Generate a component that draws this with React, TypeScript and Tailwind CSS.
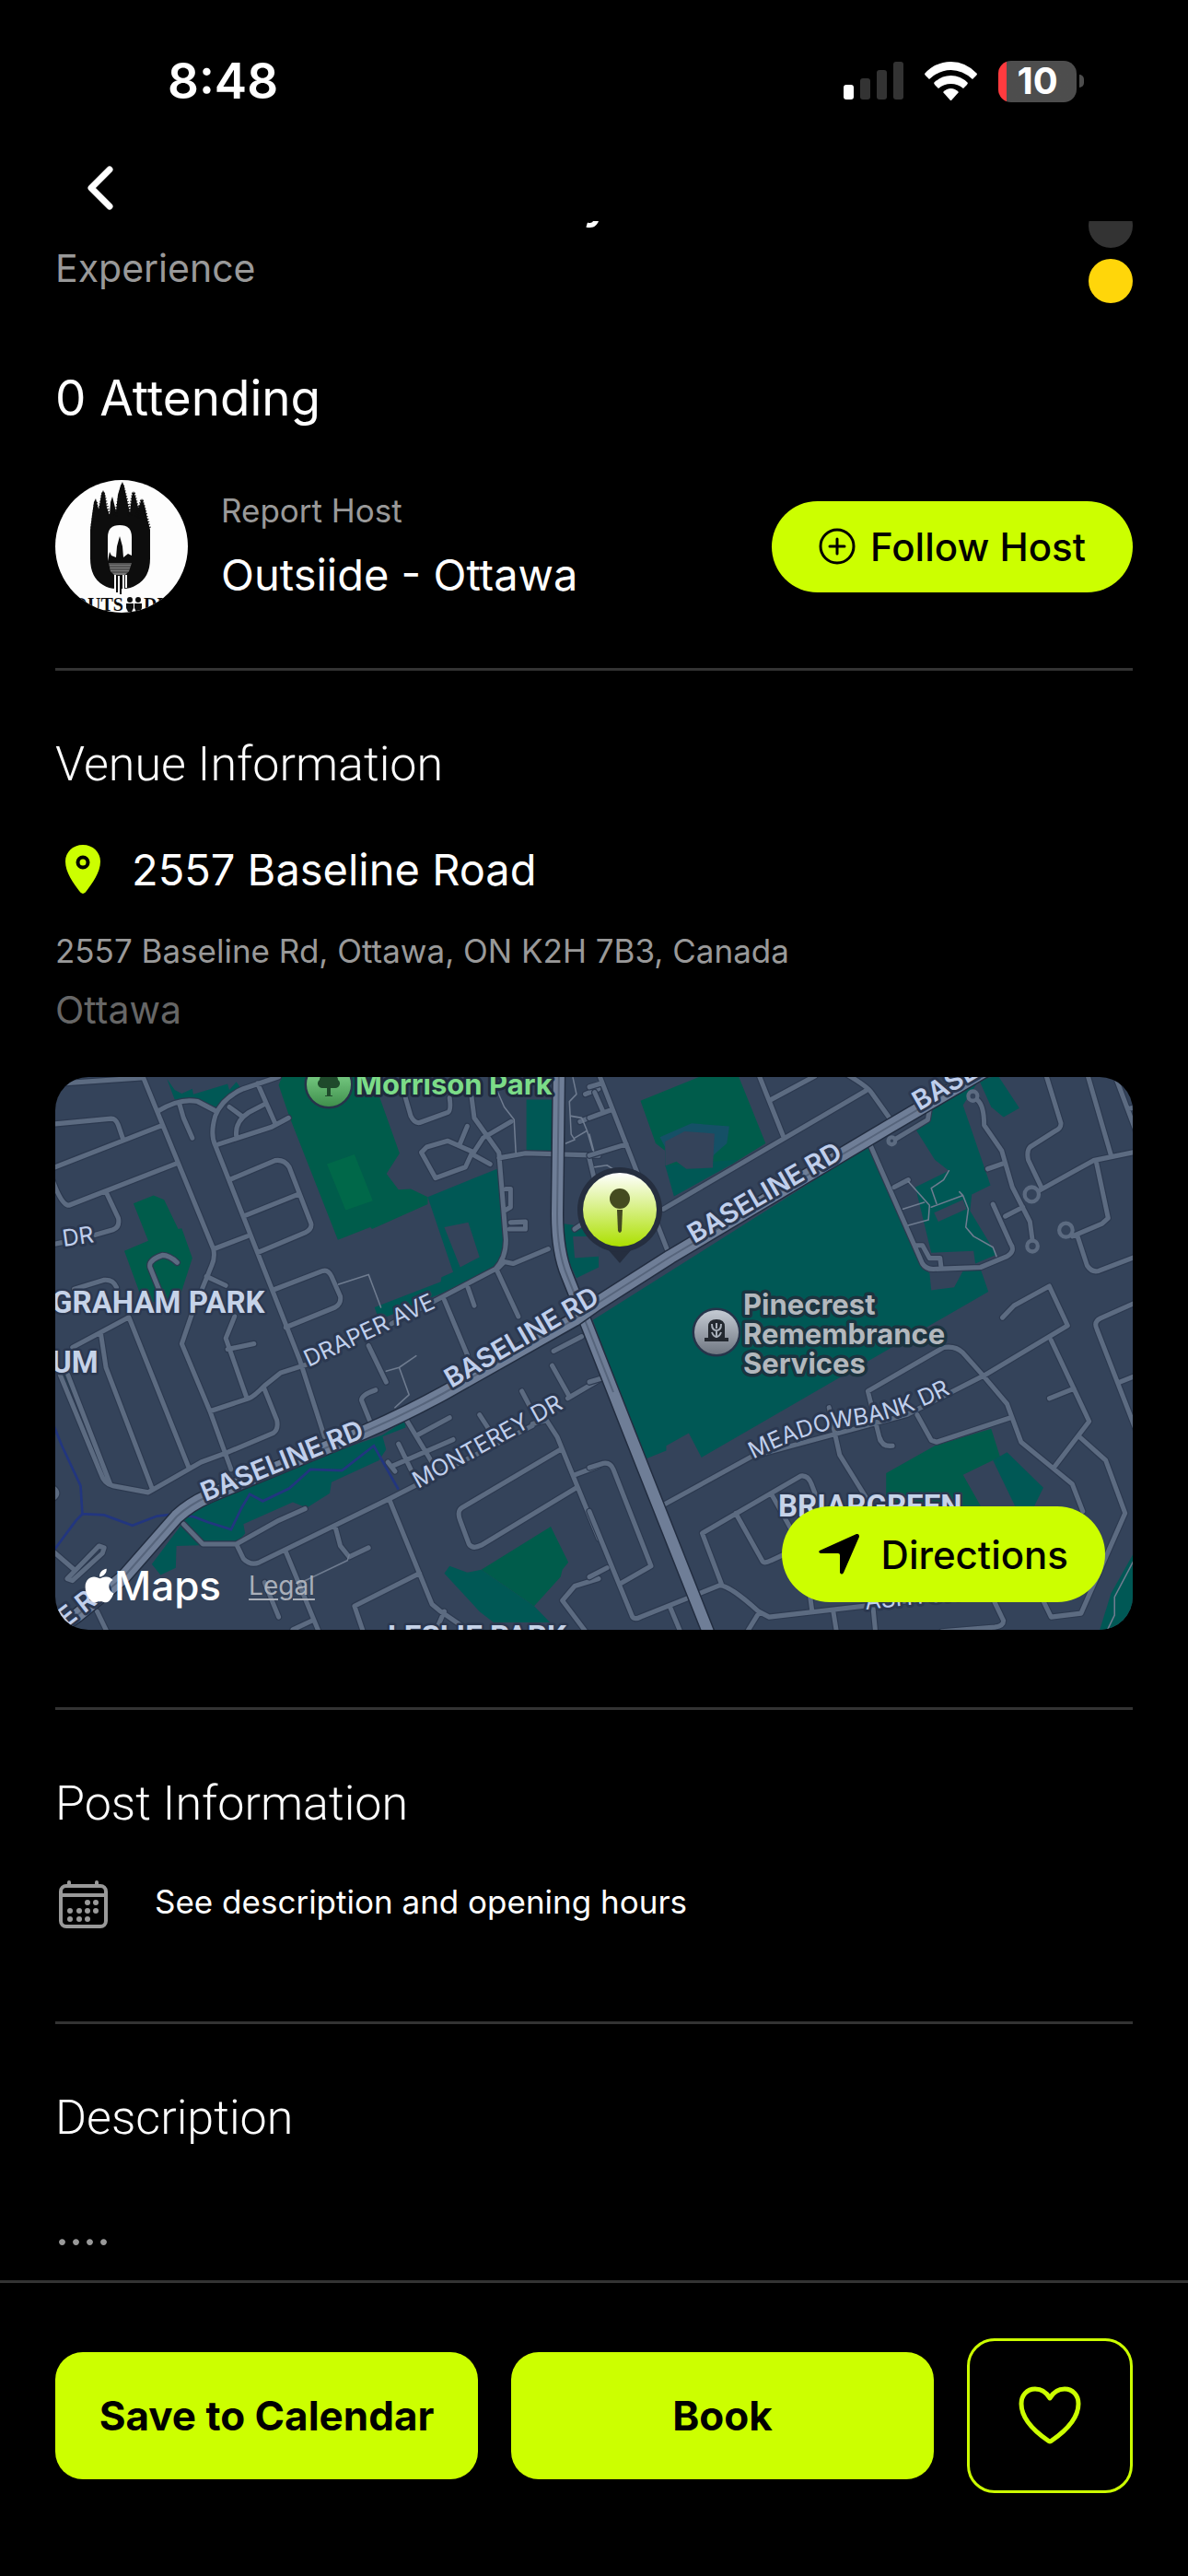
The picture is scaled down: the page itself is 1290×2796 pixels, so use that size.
import type { ReactNode } from "react";
import { FaApple } from "react-icons/fa";

type RoadLabel = { text: string; x: number; y: number; rotate: number; major?: boolean };

const ROAD_LABELS: RoadLabel[] = [
    { text: "BASELINE RD", x: 163, y: 461, rotate: -22, major: true },
    { text: "BASELINE RD", x: 430, y: 338, rotate: -30, major: true },
    { text: "BASELINE RD", x: 694, y: 181, rotate: -30, major: true },
    { text: "BASELINE RD", x: 938, y: 37, rotate: -30, major: true },
    { text: "E RD", x: 12, y: 598, rotate: -38, major: true },
    { text: "DRAPER AVE", x: 275, y: 315, rotate: -25 },
    { text: "MONTEREY DR", x: 394, y: 447, rotate: -29 },
    { text: "DR", x: 9, y: 184, rotate: -8 },
    { text: "ASHTON", x: 880, y: 578, rotate: -6 },
];

// West half of the map, drawn on a 1568 grid
const WEST_ROADS = [
    "M20 42L270 25", "M272 15L475 495Q480 520 470 540L415 670L385 755L465 940L525 1100",
    "M320 115Q380 80 430 90L485 118", "M378 95L390 135L415 190",
    "M20 152L185 137Q198 137 205 155L218 192", "M20 272L330 155", "M20 310Q45 375 65 375L370 260",
    "M170 338L205 410Q210 435 190 442L140 456", "M20 482L45 477",
    "M660 22L560 55Q500 80 480 130Q465 180 480 210L720 800L790 1010",
    "M600 40L650 150", "M490 207L640 160L688 135", "M625 95L575 120Q535 145 540 185", "M520 105L555 130",
    "M520 305L650 252Q675 248 690 270L752 425Q755 440 735 450L600 505", "M560 405L715 345", "M475 495L570 460",
    "M645 607L785 555Q800 550 810 570L835 625Q838 645 820 655L680 710",
    "M455 570L510 595", "M80 605L165 580Q190 578 200 600", "M75 765L235 682L405 1095", "M155 725L170 820L302 1155",
    "M40 840L155 1110Q165 1140 190 1145L290 1163L440 1080L510 1055L645 1000Q660 990 655 965L620 880",
    "M62 840L182 1140", "M465 940L575 905Q590 900 620 870L665 835L740 812",
    "M535 680L510 740L570 905", "M515 770L590 755", "M320 605L295 545Q290 525 330 512Q350 512 372 532",
    "M915 760L965 860", "M918 965L895 910Q895 895 935 882", "M1130 635L1195 785",
    "M980 700L1275 550Q1305 520 1305 470L1285 230L1215 135L1205 60",
    "M1020 80L1035 130Q1045 150 1060 148L1140 120Q1150 115 1145 80",
    "M1065 230L1080 215L1140 198L1210 228L1190 270L1105 300Z", "M1195 158L1175 205", "M1210 235L1260 262",
    "M1210 235L1240 190L1320 145", "M1285 245L1360 232L1568 238", "M1305 330L1318 330L1318 380L1300 390",
    "M1315 440L1360 440L1360 420L1318 422", "M1280 550L1300 530L1325 535L1425 495", "M1280 555L1340 680",
    "M1195 595L1215 650", "M390 1250L445 1305L540 1305L660 1240L735 1208",
    "M540 1305L560 1345Q580 1365 605 1355L975 1180L1380 980", "M975 1185L1095 1470L1120 1490L1180 1530",
    "M680 1325L780 1560", "M820 1255L835 1310L860 1340L915 1315", "M1060 1385L875 1475L905 1560",
    "M1130 1490L1105 1545", "M700 1540L755 1515", "M620 1410L660 1505", "M1480 905L1568 855", "M1436 815L1485 900",
    "M1350 885L1385 950", "M1380 975L1420 965L1450 1010L1568 1290",
    "M1460 1045L1180 1205Q1165 1215 1175 1240L1200 1305Q1210 1320 1235 1308L1505 1150", "M1500 1115L1568 1090",
    "M1440 775L1520 735", "M1568 1400L1500 1420L1465 1460L1535 1550", "M1020 960L1095 1080", "M1055 1005L1145 958",
    "M990 1105L970 1080", "M985 1090L1155 1018", "M1000 1030L1035 1100", "M1230 950L1260 995",
    "M20 1325L80 1375", "M60 1400L150 1310L165 1315L160 1330L75 1405Z", "M145 1490L175 1550", "M20 1150Q42 1165 20 1180",
    "M1540 240L1555 300", "M1515 145L1568 125", "M1530 70L1568 55", "M1500 440L1530 420",
];

const WEST_PATHS = [
    "M830 592L915 565L950 655", "M965 830L1002 820L1050 788", "M1002 820L1030 895L990 930",
    "M725 1410L855 1350L860 1335", "M1280 60L1300 105L1328 140L1333 230",
    "M1495 25L1505 70L1485 90L1490 180L1500 195L1475 205", "M1490 130L1520 135L1535 170L1555 235", "M1500 190L1535 170",
];

// East half of the map, same grid
const EAST_ROADS = [
    "M25 10L220 495", "M0 50L35 40", "M0 135L65 112", "M15 65L40 120", "M0 238L105 207", "M480 15L550 185",
    "M515 85L640 20", "M210 385L785 60", "M730 15Q790 50 800 65L855 140",
    "M795 205L945 535Q955 550 975 550L1110 545L1185 515Q1210 500 1195 480L1145 372", "M865 325L905 305",
    "M930 485L945 485L965 520L995 520L998 545", "M965 110L960 140L870 192",
    "M1100 85Q1120 100 1120 155L1170 225L1200 325L1250 420L1257 470", "M1130 275L1175 260",
    "M1180 405L1230 380", "M1275 335L1430 252L1550 228",
    "M1295 15L1338 150Q1338 165 1320 172L1250 215Q1240 225 1245 250L1282 325", "M1413 15L1480 238",
    "M1490 15L1550 170", "M1530 110L1550 105", "M1438 255L1472 410L1455 425L1370 460",
    "M1385 460L1412 540Q1425 560 1445 555L1550 516", "M1172 683L1205 650L1305 597L1357 705L1120 842L900 950L460 1065L205 1200",
    "M1310 745L1418 968L1318 1095", "M1305 905L1375 878", "M1550 642L1450 685Q1430 695 1440 715L1550 990", "M1505 860L1550 843",
    "M825 1020L790 885L1005 765Q1040 760 1060 780L1115 840L1185 920L1225 1025L1370 1140L1400 1215",
    "M825 1015Q830 1038 860 1035", "M930 950L970 1020L985 1025L1195 958", "M680 930L710 1060L790 1185",
    "M1390 1010L1465 1075L1520 1220L1395 1495L1310 1505L1285 1455", "M375 1415L320 1275L600 1118Q620 1115 630 1140L650 1190",
    "M515 1165L570 1260", "M415 1220L490 1350Q495 1360 515 1350L560 1330",
    "M0 1095L40 1083Q60 1080 68 1100L175 1365L85 1415",
    "M0 1215L120 1500Q125 1515 145 1505L370 1418Q400 1420 480 1490L510 1505L960 1455", "M0 1395L50 1370",
    "M230 1480L260 1550", "M480 1495L445 1550", "M692 1490L702 1550", "M805 1480L812 1550",
    "M1150 1465L1175 1515Q1175 1530 1150 1533L1000 1545", "M625 1440L632 1490", "M0 860L35 850",
];

const EAST_PATHS = [
    "M905 310L965 375L962 415L905 430", "M890 385L950 367", "M970 380L1060 348L1075 385L1068 435L1090 460L1145 490L1155 515",
    "M985 370L970 328L1005 305L1020 280", "M1060 348L1050 338", "M1550 1340L1490 1450L1490 1500L1465 1550",
    "M0 180L12 225", "M15 270L50 265L75 280",
];

const CUL_DE_SACS = [
    [858, 198, 10], [1088, 75, 13], [1257, 487, 15], [1255, 345, 20], [1352, 443, 19],
];

const BASELINE = "M-10 608L24 584L74 543L132 477Q146 464 166 455L334 386Q380 366 422 343L564 263L588 246L668 195L905 54L1016 -11";
const GREENBANK = "M547 -10L545 149Q545 190 556 216L580 276L624 388L708 600L714 615";

function Roads({ roads, paths }: { roads: string[]; paths: string[] }) {
    return (
        <g fill="none" strokeLinecap="round" strokeLinejoin="round">
            <path d={roads.join("")} stroke="#2c394f" strokeWidth="19" />
            <path d={roads.join("")} stroke="#5c6b81" strokeWidth="13" />
            <path d={paths.join("")} stroke="#6f7c90" strokeWidth="4" />
        </g>
    );
}

function MapDrawing() {
    return (
        <svg
            viewBox="0 0 1170 600"
            preserveAspectRatio="xMidYMid slice"
            className="block h-full w-full font-[Inter,sans-serif]"
            role="img"
            aria-label="Map of 2557 Baseline Road"
        >
            <defs>
                <linearGradient id="pin" x1="0" y1="0" x2="0" y2="1">
                    <stop offset="0" stopColor="#ffffff" />
                    <stop offset="1" stopColor="#ace000" />
                </linearGradient>
                <linearGradient id="poi-grey" x1="0" y1="0" x2="0" y2="1">
                    <stop offset="0" stopColor="#c5cbd4" />
                    <stop offset="1" stopColor="#6f7681" />
                </linearGradient>
                <linearGradient id="poi-green" x1="0" y1="0" x2="0" y2="1">
                    <stop offset="0" stopColor="#8be096" />
                    <stop offset="1" stopColor="#3f8f4c" />
                </linearGradient>
                <path id="meadowbank" d="M758 415Q816 384 870 378Q930 370 1000 328" />
            </defs>
            <rect width="1170" height="600" fill="#34435a" />

            <g transform="translate(-10 -9) scale(.3827 .3954)">
                <g fill="#005c4b">
                    <path d="M670 20L925 20L1003 232L966 288L1000 332L1035 330L1083 352L1083 372L925 440L920 435L828 470L690 130L660 45Z" />
                    <path d="M248 370L305 348L335 360L375 440L385 438L415 520L375 640L275 640L222 500L290 472Z" />
                    <path d="M1235 1375L1432 1257L1482 1355L1465 1375L1460 1395L1385 1475Z" />
                </g>
                <path d="M797 262L875 235L927 362L850 388Z" fill="#006849" />
                <g fill="#005855">
                    <path d="M343 28L365 58L385 68L415 55L418 70L515 42L520 58L540 36L550 50L490 108L440 90L365 85Z" />
                    <path d="M1083 352L1280 275L1298 420Q1305 520 1270 545L1125 615L945 690L932 655L1120 585L1122 572L1155 558Z" />
                    <path d="M1363 85L1435 85L1435 230L1363 230Z" />
                    <path d="M1465 425L1568 440L1568 545L1505 575L1470 500Z" />
                    <path d="M440 1180L955 1005L1020 965L1020 985L955 1010L965 1045L945 1075L810 1135L805 1165L740 1205L700 1190L560 1250L565 1275L540 1305L370 1310L368 1370L325 1390L300 1360Z" />
                    <path d="M1130 1385L1145 1365L1195 1383L1235 1375L1385 1475L1430 1520L1270 1520L1230 1490Z" />
                    <path d="M50 835L66 840L185 1140L165 1130Z" />
                </g>
                <g fill="#34435a">
                    <path d="M1130 435L1198 422L1230 517L1175 545Z" />
                    <path d="M1495 460L1568 460L1568 515L1500 520Z" />
                </g>
                <Roads roads={WEST_ROADS} paths={WEST_PATHS} />
                <path
                    d="M20 975L45 1035L98 1145L103 1222L165 1225L245 1254L315 1228L370 1222L420 1230L460 1245L525 1265L555 1205L578 1168L615 1187L690 1152L750 1100L840 1103L930 1035L1000 1155M103 1222L85 1240L20 1325"
                    fill="none" stroke="#22367f" strokeWidth="7"
                />
            </g>

            <g transform="translate(580 -9) scale(.3827 .3954)">
                <path d="M145 88L318 20L423 20L500 205L405 262L215 268L215 225L188 205Z" fill="#005c4b" />
                <path d="M842 1110L980 1035L1140 988L1165 1065L1145 1075L1060 1115L1110 1200L842 1200Z" fill="#005c4b" />
                <g fill="#005855">
                    <path d="M215 265L420 250L405 262L240 350Z" />
                    <path d="M10 690L795 210L850 330L945 550L965 560L970 608L1035 600L1060 555L1110 550L1132 612L318 1067L282 1000L218 1035L218 1048L155 1073Z" />
                    <path d="M925 165L985 100L1100 40L1060 100L1138 320L1085 345L1080 390L1155 510L1095 535L1090 500L970 505L925 325L1020 280L980 250Z" />
                    <path d="M1105 30L1160 20L1220 108L1175 133L1140 105Z" />
                    <path d="M1145 1075L1185 1053L1288 1150L1260 1205L1210 1205Z" />
                    <path d="M1550 1320L1480 1440L1445 1550L1550 1550Z" />
                </g>
                <path d="M200 188L290 150L397 158L390 205L358 232L350 240L220 225Z" fill="#155066" />
                <g fill="#34435a">
                    <path d="M215 200L270 172L355 178L350 272L275 275L247 255L215 267Z" />
                    <path d="M978 395L1060 360L1070 385L990 420Z" />
                </g>
                <Roads roads={EAST_ROADS} paths={EAST_PATHS} />
                {CUL_DE_SACS.map(([cx, cy, r]) => (
                    <circle key={cx} cx={cx} cy={cy} r={r} fill="#34435a" stroke="#5c6b81" strokeWidth="11" />
                ))}
            </g>

            {/* main roads */}
            <g fill="none" strokeLinejoin="round">
                <path d={GREENBANK} stroke="#222d40" strokeWidth="15" />
                <path d={GREENBANK} stroke="#6f7e97" strokeWidth="12" />
                <path d="M547 -10L545 149Q545 190 556 216L580 276L606 342" stroke="#56647b" strokeWidth="2" />
                <path d={BASELINE} stroke="#222d40" strokeWidth="17" />
                <path d={BASELINE} stroke="#6f7e97" strokeWidth="14" />
                <path d={BASELINE} stroke="#56647b" strokeWidth="2" />
            </g>

            <g fill="#c0cfec" stroke="#2b3850" strokeWidth="6" strokeLinejoin="round" style={{ paintOrder: "stroke" }}>
                {ROAD_LABELS.map((label) => (
                    <text
                        key={`${label.text}-${label.x}`}
                        x={label.x}
                        y={label.y}
                        transform={`rotate(${label.rotate} ${label.x} ${label.y})`}
                        className={label.major ? "text-[29px] font-semibold" : "text-[25px]"}
                    >
                        {label.text}
                    </text>
                ))}
                <text className="text-[25px]"><textPath href="#meadowbank">MEADOWBANK DR</textPath></text>
            </g>

            <g
                fill="#c6d3e8" stroke="#2b3850" strokeWidth="5" strokeLinejoin="round" style={{ paintOrder: "stroke" }}
                className="font-[Roboto,sans-serif] text-[33px] font-bold"
            >
                <text x="-4" y="256">GRAHAM PARK</text>
                <text x="-4" y="321">UM</text>
                <text x="785" y="477">BRIARGREEN</text>
                <text x="361" y="619">LESLIE PARK</text>
            </g>

            {/* places */}
            <g strokeLinejoin="round" style={{ paintOrder: "stroke" }} className="font-bold">
                <circle cx="297" cy="8" r="24" fill="url(#poi-green)" stroke="#26344a" strokeWidth="5" />
                <path d="M295 20v-8h-5a5 5 0 0 1-3-9 6 6 0 0 1 6-6h8a6 6 0 0 1 6 6 5 5 0 0 1-3 9h-5v8h2v1h-8v-1z" fill="#1f4a2b" />
                <text x="326" y="19" fill="#7cdc88" stroke="#1f2b3d" strokeWidth="6" className="text-[31px]">Morrison Park</text>
                <circle cx="718" cy="277" r="24" fill="url(#poi-grey)" stroke="#26344a" strokeWidth="5" />
                <path d="M709 283v-12q0-8 9-8t9 8v12h4v4h-26v-4z" fill="#23282f" />
                <path d="M718 283v-8M713 268q0 7 5 7t5-7M718 267v6M713 277q2 5 5 5t5-5" fill="none" stroke="#a9b0ba" strokeWidth="2" />
                <g fill="#b3b8bd" stroke="#1c3440" strokeWidth="7" className="text-[31px]">
                    <text x="747" y="258">Pinecrest</text>
                    <text x="747" y="290">Remembrance</text>
                    <text x="747" y="322">Services</text>
                </g>
            </g>

            <path d="M600 187h26l-13 15z" fill="#252e3f" />
            <circle cx="613" cy="144" r="46" fill="#252e3f" />
            <circle cx="613" cy="144" r="40" fill="url(#pin)" />
            <circle cx="613" cy="132" r="11" fill="#454b20" />
            <path d="M610 144h6l-1 23q-2 4-4 0z" fill="#454b20" />
        </svg>
    );
}

function HostLogo() {
    return (
        <svg viewBox="0 0 144 144" className="size-36 shrink-0 rounded-full bg-[#fdfdfd]" role="img" aria-label="Outsiide logo">
            <path
                d="M38 54L40 38L42 24L44 20L47 32L48 28L50 16L52 11L54 16L56 30L59 38L60 24L62 18L64 26L66 34L68 16L71 6L73 2L75 8L78 22L81 36L83 18L85 12L87 18L90 30L92 26L94 20L97 28L100 42L103 54V85Q103 106 88 114Q82 118 74 118H66Q58 118 52 114Q38 106 38 85Z"
                fill="#0d0d0d"
            />
            <g fill="none" stroke="#0d0d0d" strokeWidth="4" strokeDasharray="1 2">
                <path d="M44 24L40 52M44 24L47 46M52 14L46 44M52 14L59 42M73 6L65 40M73 6L82 40M85 14L80 40M85 14L92 42M94 22L88 42M94 22L102 52" />
            </g>
            <path d="M57 88V62Q57 49 70 49Q83 49 83 62V88Z" fill="#fdfdfd" />
            <path d="M57 88L59 78L61 82L66 84L67 72L70 61L73 72L74 84L79 80L83 82V88Z" fill="#0d0d0d" />
            <path d="M58 90H83L80 99L76 103H64L60 99Z" fill="#777" />
            <path d="M58 91H83M59 94H82M60 97H81M61 100H79" stroke="#333" strokeWidth="1" />
            <path d="M65 103V121M69 104V122M74 103V120M77 103V117" stroke="#fdfdfd" strokeWidth="2" />
            <path d="M67 108V122M71 106V124" stroke="#0d0d0d" strokeWidth="2" />
            <g fill="#0d0d0d">
                <g className="font-['Liberation_Serif',serif] text-[20px] font-bold">
                    <text x="19" y="142">O</text>
                    <text x="35" y="142">UTS</text>
                    <text x="96" y="142">DE</text>
                </g>
                <circle cx="81" cy="130" r="3" />
                <circle cx="90" cy="130" r="3" />
                <path d="M77 134h8v5l-2 4h-4l-2-4zM86 134h8v5l-2 4h-4l-2-4z" />
            </g>
        </svg>
    );
}

function StatusBar() {
    return (
        <div className="flex h-44 items-center justify-between pr-[113px] pl-[182px]">
            <span className="text-[53px] leading-none font-semibold">8:48</span>
            <div className="flex items-center">
                <svg viewBox="0 0 65 42" className="h-[42px] w-[65px]" aria-hidden="true">
                    <rect x="0" y="25" width="11" height="16" rx="3" fill="#fff" />
                    <rect x="18" y="18" width="11" height="23" rx="3" fill="#333" />
                    <rect x="36" y="9" width="11" height="32" rx="3" fill="#333" />
                    <rect x="54" y="0" width="11" height="41" rx="3" fill="#333" />
                </svg>
                <svg viewBox="0 0 57 42" className="ml-[23px] h-[42px] w-[57px]" fill="#fff" aria-hidden="true">
                    <path d="M0 13Q12 0 28.500 0T57 13Q57 14 56 15L52 19Q41 9 28.500 9T5 19L1 15Q0 14 0 13Z" />
                    <path d="M10 23Q18 15 28.500 15T47 23L46 25L42 29Q36 24 28.500 24T15 29L11 25Z" />
                    <path d="M20 33Q24 29 28.500 29T37 33L29 42H28Z" />
                </svg>
                <div className="ml-[23px] flex h-[45px] w-[85px] items-center justify-center rounded-[14px] bg-linear-to-r from-[#ff3b3f] from-[9px] to-[#4d4d4d] to-[9px] text-[40px] leading-none font-bold">
                    10
                </div>
                <span className="ml-[3px] h-[14px] w-[5px] rounded-r-full bg-[#4d4d4d]" />
            </div>
        </div>
    );
}

function SectionTitle({ children }: { children: ReactNode }) {
    return <h2 className="mt-[70px] font-[Roboto,sans-serif] text-[52px] leading-[64px] font-light">{children}</h2>;
}

function CalendarIcon() {
    return (
        <svg viewBox="0 0 54 54" className="size-[54px] shrink-0" aria-hidden="true">
            <g fill="none" stroke="#999" strokeWidth="4">
                <rect x="2" y="7" width="49" height="44" rx="6" />
                <path d="M3 17H50M11 6V3M41 6V3" strokeLinecap="round" />
            </g>
            <g fill="#999">
                <circle cx="31" cy="25" r="3" /><circle cx="40" cy="25" r="3" />
                <circle cx="12" cy="34" r="3" /><circle cx="22" cy="34" r="3" /><circle cx="31" cy="34" r="3" /><circle cx="40" cy="34" r="3" />
                <circle cx="12" cy="43" r="3" /><circle cx="22" cy="43" r="3" /><circle cx="31" cy="43" r="3" />
            </g>
        </svg>
    );
}

export default function App() {
    return (
        <div className="flex min-h-screen flex-col bg-black font-[Inter,sans-serif] text-white">
            <header className="h-60 shrink-0">
                <StatusBar />
                <button aria-label="Back" className="ml-[84px] block">
                    <svg viewBox="0 0 48 56" className="h-14 w-12" fill="none" stroke="#fff" strokeWidth="7" strokeLinecap="round" strokeLinejoin="round">
                        <path d="M35 8L15 28L35 48" />
                    </svg>
                </button>
            </header>

            <main className="flex-1 overflow-hidden px-[60px]">
                {/* scrolled partly under the header */}
                <div className="-mt-[57px] flex h-[146px] justify-between">
                    <div className="flex flex-col gap-3">
                        <p className="pl-[573px] text-[54px] leading-[68px] font-medium">y</p>
                        <p className="text-[41px] leading-[56px] text-[#999]">Experience</p>
                    </div>
                    <div className="flex flex-col justify-end gap-3">
                        <span className="size-12 rounded-full bg-[#333]" />
                        <span className="size-12 rounded-full bg-[#ffd60a]" />
                    </div>
                </div>

                <p className="mt-[71px] text-[53px] leading-[64px]">0 Attending</p>

                <div className="mt-[57px] flex items-center">
                    <HostLogo />
                    <div className="ml-9 flex flex-1 flex-col items-start gap-[14px]">
                        <button className="text-[35px] leading-[48px] text-[#999]">Report Host</button>
                        <p className="text-[47px] leading-[64px]">Outsiide - Ottawa</p>
                    </div>
                    <button className="flex h-[99px] items-center gap-4 rounded-full bg-[#ccff00] px-[51px] text-[42px] font-medium text-black">
                        <svg viewBox="0 0 40 40" className="size-10" fill="none" stroke="#000" strokeWidth="3" strokeLinecap="round" aria-hidden="true">
                            <circle cx="20" cy="20" r="18" />
                            <path d="M20 12V28M12 20H28" />
                        </svg>
                        Follow Host
                    </button>
                </div>

                <hr className="mt-[60px] border-t-3 border-[#333]" />

                <section>
                    <SectionTitle>Venue Information</SectionTitle>
                    <div className="mt-[50px] flex items-center gap-[34px]">
                        <svg viewBox="0 0 38 54" className="ml-[11px] h-[54px] w-[38px]" aria-hidden="true">
                            <path d="M19 0C8 0 0 8 0 18C0 30 9 42 15 50Q19 56 23 50C29 42 38 30 38 18C38 8 30 0 19 0Z" fill="#ccff00" />
                            <circle cx="19" cy="19" r="5.500" fill="none" stroke="#000" strokeWidth="4" />
                        </svg>
                        <p className="text-[47px] leading-[64px]">2557 Baseline Road</p>
                    </div>
                    <p className="mt-8 text-[35px] leading-[48px] text-[#999]">2557 Baseline Rd, Ottawa, ON K2H 7B3, Canada</p>
                    <p className="mt-[10px] text-[41px] leading-[60px] text-[#666]">Ottawa</p>

                    <div className="relative mt-[43px] h-[600px] overflow-hidden rounded-[36px]">
                        <MapDrawing />
                        <div className="absolute bottom-[22px] left-8 flex items-center">
                            <FaApple className="h-[42px] w-8" aria-hidden="true" />
                            <span className="text-[44px] leading-[52px] font-medium">Maps</span>
                            <a href="#legal" className="ml-[30px] text-[28px] leading-8 text-[#a9afb9] underline underline-offset-4">Legal</a>
                        </div>
                        <button className="absolute right-[30px] bottom-[30px] flex h-[104px] items-center gap-6 rounded-full bg-[#ccff00] px-10 text-[42px] font-medium text-black">
                            <svg viewBox="0 0 44 44" className="size-11" aria-hidden="true">
                                <path d="M42 0Q44 0 44 3L27 42Q25 45 23 42V23Q23 21 21 21H2Q-1 20 1 18L41 0Z" />
                            </svg>
                            Directions
                        </button>
                    </div>
                </section>

                <hr className="mt-[84px] border-t-3 border-[#333]" />

                <section>
                    <SectionTitle>Post Information</SectionTitle>
                    <div className="mt-[50px] flex items-start gap-[50px] pl-1">
                        <CalendarIcon />
                        <p className="text-[35px] leading-[48px]">See description and opening hours</p>
                    </div>
                </section>

                <hr className="mt-[100px] border-t-3 border-[#333]" />

                <section>
                    <SectionTitle>Description</SectionTitle>
                    <p className="mt-[56px] text-[52px] leading-[64px] text-[#999]">....</p>
                </section>
            </main>

            <footer className="flex shrink-0 items-center gap-9 border-t-3 border-[#333] px-[60px] pt-[60px] pb-[90px]">
                <button className="h-[138px] flex-1 rounded-[30px] bg-[#ccff00] text-[44px] font-bold text-black">Save to Calendar</button>
                <button className="h-[138px] flex-1 rounded-[30px] bg-[#ccff00] text-[44px] font-bold text-black">Book</button>
                <button aria-label="Add to favourites" className="flex h-[168px] w-[180px] items-center justify-center rounded-[30px] border-3 border-[#ccff00]">
                    <svg viewBox="0 0 68 64" className="h-16 w-[68px]" fill="none" stroke="#ccff00" strokeWidth="5" strokeLinejoin="round" strokeLinecap="round">
                        <path d="M34 13C30 6 25 3 18 3C9 3 3 10 3 19C3 35 16 48 32 59Q34 61 36 59C52 48 65 35 65 19C65 10 59 3 50 3C43 3 38 6 34 13Z" />
                    </svg>
                </button>
            </footer>
        </div>
    );
}
